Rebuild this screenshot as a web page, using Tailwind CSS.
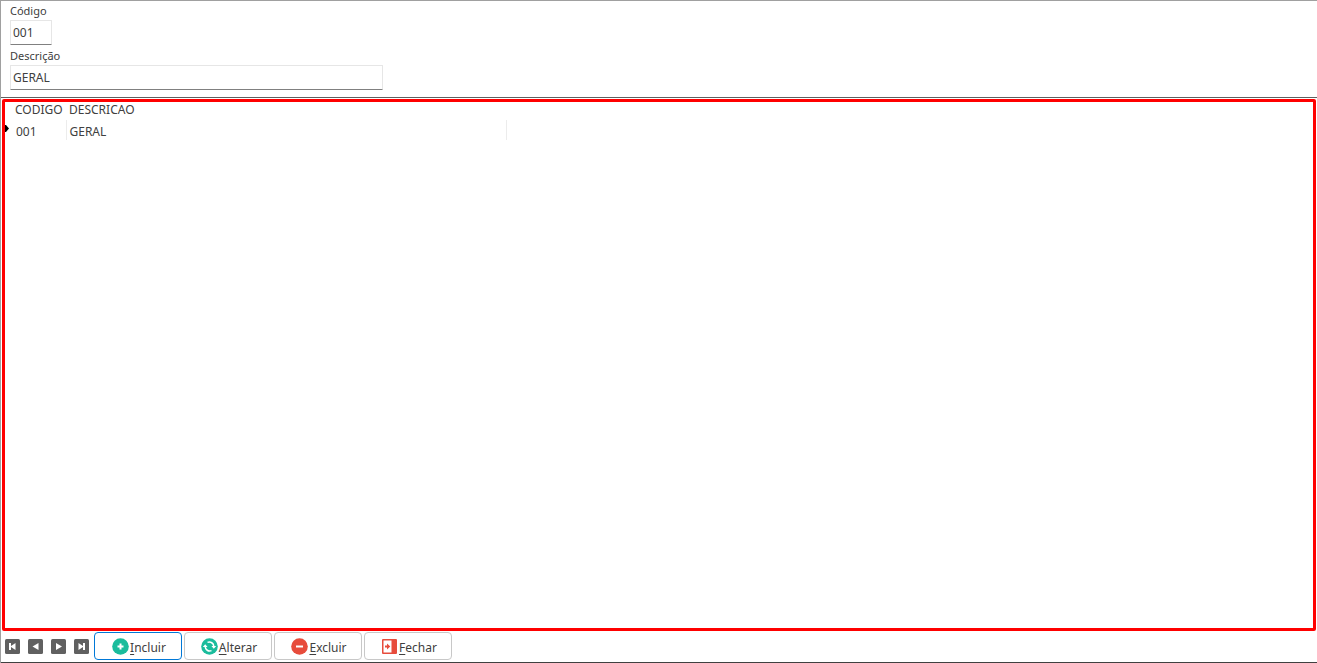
<!DOCTYPE html>
<html lang="pt-BR">
<head>
    <meta charset="UTF-8">
    <meta name="viewport" content="width=device-width, initial-scale=1.0">
    <title>Cadastro</title>
    <script src="https://cdn.jsdelivr.net/npm/@tailwindcss/browser@4"></script>
</head>
<body class="bg-white text-[#404040] font-['Noto_Sans','Open_Sans',sans-serif] text-xs">
    <div class="h-screen flex flex-col border-t border-l border-[#a0a0a0]">
        <!-- Form -->
        <form class="px-[9px] pt-[2px] pb-[7px] border-b border-[#606060]">
            <label for="codigo" class="block pb-px text-[11px] leading-4">Código</label>
            <input id="codigo" type="text" value="001"
                   class="block w-[42px] h-[25px] px-[2px] border border-[#e6e6e6] border-b-[#808080] rounded-[1px]">
            <label for="descricao" class="block pt-[3px] pb-px text-[11px] leading-4">Descrição</label>
            <input id="descricao" type="text" value="GERAL"
                   class="block w-[373px] h-[25px] px-[2px] border border-[#e6e6e6] border-b-[#808080] rounded-[1px]">
        </form>

        <!-- Grid -->
        <div class="flex-1 mt-px ml-px mr-px border-3 border-[#ff0000] rounded-xs">
            <table class="table-fixed w-[502px] border-collapse">
                <thead>
                    <tr class="h-[18px] leading-4 text-left align-top">
                        <th class="w-[10px] p-0"></th>
                        <th class="w-[51px] p-0 font-normal align-top">CODIGO</th>
                        <th class="p-0 pl-[3px] font-normal align-top">DESCRICAO</th>
                    </tr>
                </thead>
                <tbody>
                    <tr class="h-5 leading-4">
                        <td class="p-0 align-top pt-[5px]">
                            <svg class="block w-1 h-[7px]" viewBox="0 0 4 7" fill="#000"><path d="M0 0h1l3 3.500-3 3.500H0z"/></svg>
                        </td>
                        <td class="p-0 pl-px pt-[3px] border-r border-[#ececec]">001</td>
                        <td class="p-0 pl-[3px] pt-[3px] border-r border-[#ececec]">GERAL</td>
                    </tr>
                </tbody>
            </table>
        </div>

        <!-- Toolbar -->
        <div class="flex items-center pl-1 pt-px pb-[2px] border-b border-[#404040]">
            <div class="flex gap-2 mr-[5px]">
                <button type="button" aria-label="Primeiro">
                    <svg class="block size-[15px]" viewBox="0 0 15 15"><rect width="15" height="15" rx="1.500" fill="#606060"/><path d="M4 4h2v3l4.500-3v7L6 8v3H4z" fill="#fff"/></svg>
                </button>
                <button type="button" aria-label="Anterior">
                    <svg class="block size-[15px]" viewBox="0 0 15 15"><rect width="15" height="15" rx="1.500" fill="#606060"/><path d="M10.500 4v7L4.500 7.500z" fill="#fff"/></svg>
                </button>
                <button type="button" aria-label="Próximo">
                    <svg class="block size-[15px]" viewBox="0 0 15 15"><rect width="15" height="15" rx="1.500" fill="#606060"/><path d="M5 4v7l6-3.500z" fill="#fff"/></svg>
                </button>
                <button type="button" aria-label="Último">
                    <svg class="block size-[15px]" viewBox="0 0 15 15"><rect width="15" height="15" rx="1.500" fill="#606060"/><path d="M11 4H9v3L4.500 4v7L9 8v3h2z" fill="#fff"/></svg>
                </button>
            </div>
            <div class="flex gap-[2px]">
                <button type="button" class="flex items-center justify-center gap-px pl-[2px] w-[88px] h-7 border border-[#0078d7] rounded">
                    <svg class="size-[17px]" viewBox="0 0 17 17"><circle cx="8.500" cy="8.500" r="8.300" fill="#1abc9c"/><path d="M8.500 5.500v6M5.500 8.500h6" stroke="#fff" stroke-width="2"/></svg>
                    <span class="pt-[3px]"><u class="underline-offset-2">I</u>ncluir</span>
                </button>
                <button type="button" class="flex items-center justify-center gap-px pl-[2px] w-[88px] h-7 border border-[#c8c8c8] rounded">
                    <svg class="size-[17px]" viewBox="0 0 17 17"><circle cx="8.500" cy="8.500" r="8.300" fill="#1abc9c"/><path d="M6.500 4.400a4.500 4.500 0 0 1 6.300 4.100M10.500 12.600a4.500 4.500 0 0 1-6.300-4.100" fill="none" stroke="#fff" stroke-width="1.500"/><path d="M10.400 8h4.800l-2.400 2.800zM1.800 9h4.800L4.200 6.200z" fill="#fff"/></svg>
                    <span class="pt-[3px]"><u class="underline-offset-2">A</u>lterar</span>
                </button>
                <button type="button" class="flex items-center justify-center gap-px pl-[2px] w-[88px] h-7 border border-[#c8c8c8] rounded">
                    <svg class="size-[17px]" viewBox="0 0 17 17"><circle cx="8.500" cy="8.500" r="8.300" fill="#e74c3c"/><path d="M5 8.500h7" stroke="#fff" stroke-width="2"/></svg>
                    <span class="pt-[3px]"><u class="underline-offset-2">E</u>xcluir</span>
                </button>
                <button type="button" class="flex items-center justify-center gap-px pl-[2px] w-[88px] h-7 border border-[#c8c8c8] rounded">
                    <svg class="size-[17px]" viewBox="0 0 17 17"><rect x="1" y="1" width="15" height="15" rx="1" fill="#e74c3c"/><path d="M2.500 2.500h8v12h-8z" fill="#fff"/><path d="M4 7.600h2V5.500l3.300 3L6 11.500V9.400H4z" fill="#e74c3c"/></svg>
                    <span class="pt-[3px]"><u class="underline-offset-2">F</u>echar</span>
                </button>
            </div>
        </div>
    </div>
</body>
</html>
